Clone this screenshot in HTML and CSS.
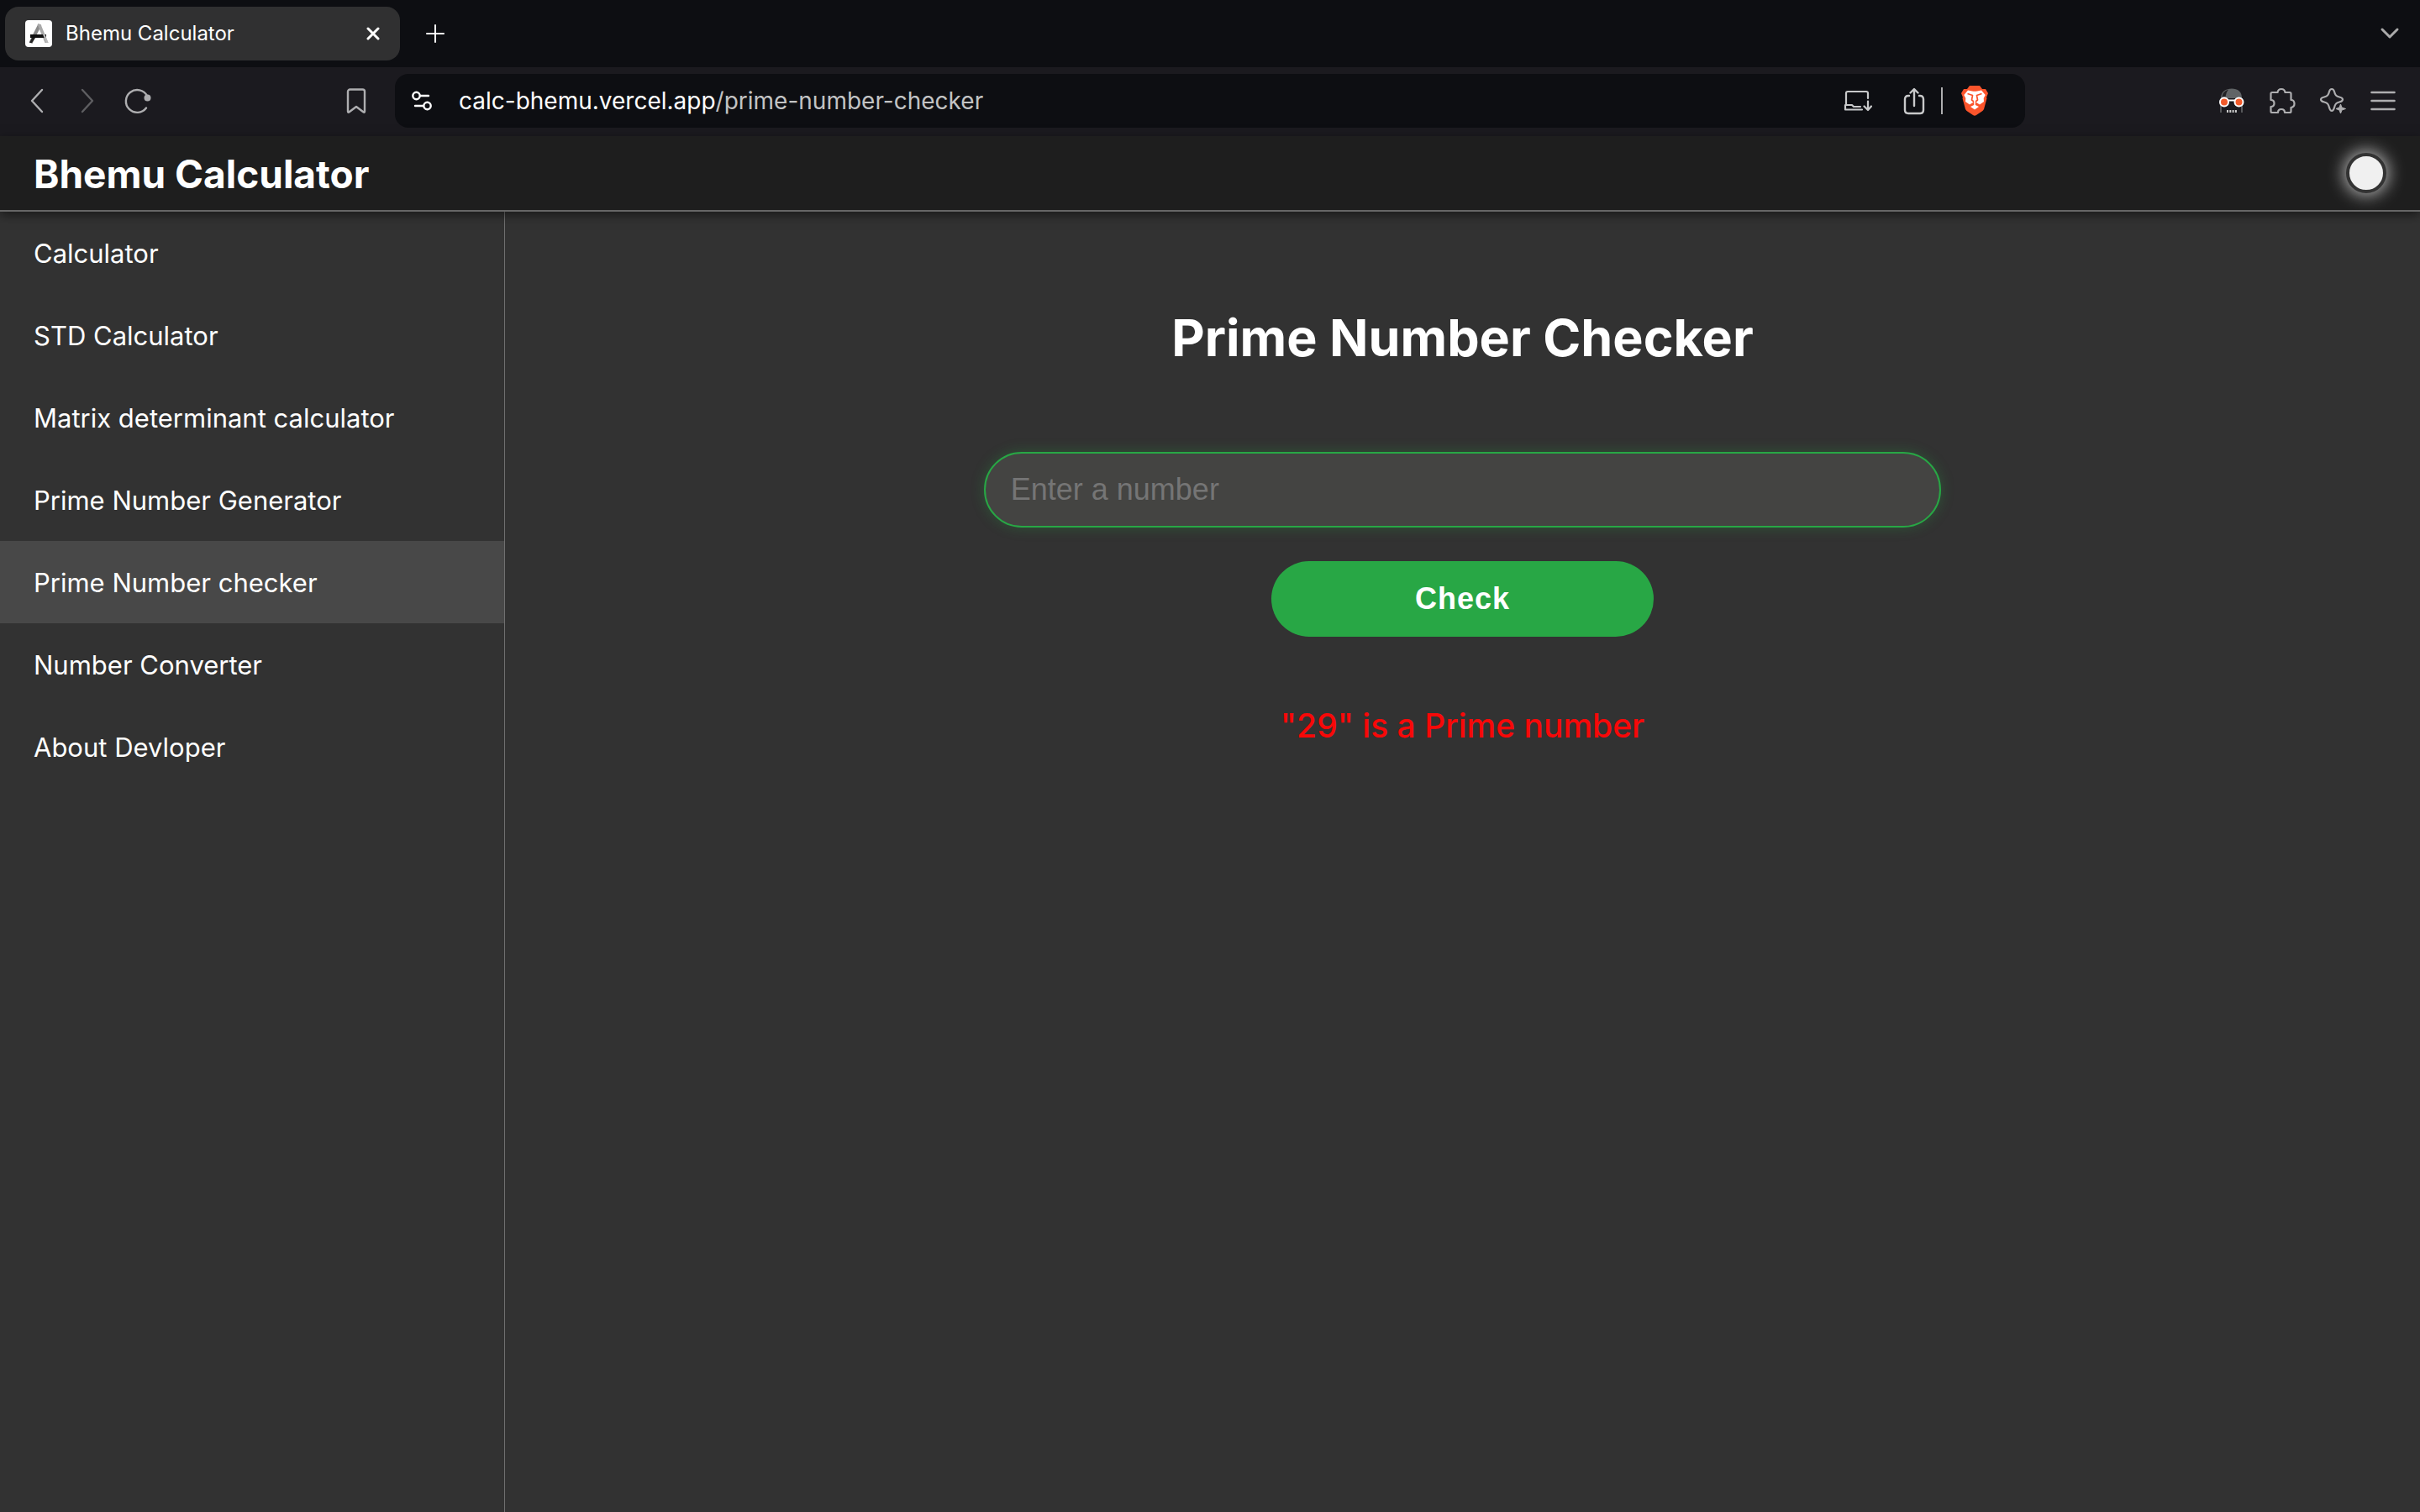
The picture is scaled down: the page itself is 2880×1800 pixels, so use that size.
FILE: index.html
```html
<!DOCTYPE html>
<html lang="en">
<head>
<meta charset="utf-8">
<title>Bhemu Calculator</title>
<link rel="stylesheet" href="styles.css">
</head>
<body>
<div class="window">
  <div class="tabstrip">
    <div class="tab">
      <svg class="tab-icon" width="32" height="32" viewBox="0 0 32 32" aria-hidden="true">
        <rect width="32" height="32" rx="4" fill="#fff"/>
        <path d="M17.500 5L6.500 27" stroke="#8a8a8a" stroke-width="4" fill="none"/>
        <path d="M14.500 5h4l9 22h-4z" fill="#a9a9a9"/>
        <path d="M6 17h19v4H6z" fill="#111"/>
        <path d="M8 21L5 27h3l4-6z" fill="#222"/>
        <path d="M21 17l4 10h2.500l-4-10z" fill="#bbb"/>
      </svg>
      <span class="tab-title">Bhemu Calculator</span>
      <button class="icon-button tab-close" aria-label="Close tab">
        <svg width="16" height="16" viewBox="0 0 16 16" fill="none" stroke="#fff" stroke-width="3" stroke-linecap="round"><path d="M2 2l12 12M14 2L2 14"/></svg>
      </button>
    </div>
    <button class="icon-button new-tab" aria-label="New tab">
      <svg width="24" height="24" viewBox="0 0 24 24" fill="none" stroke="#fff" stroke-width="2" stroke-linecap="round"><path d="M12 2v20M2 12h20"/></svg>
    </button>
    <button class="icon-button tab-search" aria-label="Search tabs">
      <svg width="24" height="16" viewBox="0 0 24 16" fill="none" stroke="#aaa" stroke-width="3" stroke-linecap="round" stroke-linejoin="round"><path d="M3 3l9 9 9-9"/></svg>
    </button>
  </div>

  <div class="toolbar">
    <button class="icon-button tool" aria-label="Back">
      <svg width="30" height="30" viewBox="0 0 30 30" fill="none" stroke="#aeaeb0" stroke-width="2.400" stroke-linecap="round" stroke-linejoin="round"><path d="M21 2L9 15l12 13"/></svg>
    </button>
    <button class="icon-button tool" aria-label="Forward">
      <svg width="30" height="30" viewBox="0 0 30 30" fill="none" stroke="#5e5e61" stroke-width="2.400" stroke-linecap="round" stroke-linejoin="round"><path d="M9 2l12 13L9 28"/></svg>
    </button>
    <button class="icon-button tool" aria-label="Reload">
      <svg width="32" height="32" viewBox="0 0 32 32" fill="none" stroke="#aeaeb0" stroke-width="2.400" stroke-linecap="round"><path d="M26 24.500A13.400 13.400 0 1 1 27 10"/><circle cx="27.500" cy="12.500" r="4" fill="#aeaeb0" stroke="none"/></svg>
    </button>
    <button class="icon-button tool bookmark" aria-label="Bookmark this page">
      <svg width="24" height="32" viewBox="0 0 24 32" fill="none" stroke="#aeaeb0" stroke-width="2.400" stroke-linejoin="round"><path d="M4.500 2.500h15a2.500 2.500 0 0 1 2.500 2.500v23.500q0 2-1.700.700L12 23l-8.300 6.200Q2 30.500 2 28.500V5a2.500 2.500 0 0 1 2.500-2.500z"/></svg>
    </button>
    <div class="address">
      <svg width="24" height="24" viewBox="0 0 24 24" fill="none" stroke="#fff" stroke-width="2.400" stroke-linecap="round" aria-hidden="true"><circle cx="5.500" cy="6" r="4.200"/><path d="M10 6h10"/><circle cx="18.500" cy="18" r="4.200"/><path d="M4 18h10"/></svg>
      <a class="url" href="#"><span class="url-host">calc-bhemu.vercel.app</span>/prime-number-checker</a>
      <button class="icon-button install" aria-label="Install app">
        <svg width="34" height="28" viewBox="0 0 34 28" fill="none" stroke="#c8c9ca" stroke-width="2.200" stroke-linecap="round" stroke-linejoin="round"><path d="M3 19V5q0-2 2-2h22q2 0 2 2v6M2 19h8l2 2h8M2 19v5.500h20"/><path d="M29 14.500v10M24.500 20.500L29 25l4-4.500"/></svg>
      </button>
      <button class="icon-button share" aria-label="Share">
        <svg width="32" height="34" viewBox="0 0 32 34" fill="none" stroke="#c8c9ca" stroke-width="2.400" stroke-linecap="round" stroke-linejoin="round"><path d="M10 11H9q-4 0-4 4v13q0 4 4 4h14q4 0 4-4V15q0-4-4-4h-1M16 23V3.500M11.500 7.500L16 3l4.500 4.500"/></svg>
      </button>
      <span class="divider"></span>
      <button class="icon-button" aria-label="Brave Shields">
        <svg width="32" height="36" viewBox="0 0 32 36"><path d="M10 0h12l3 4h4l3 5-2 5 .5 1L27 28q-1 2-3 3l-6 4q-2 1.500-4 0l-6-4q-2-1-3-3L1.500 15l.5-1-2-5 3-5h4z" fill="#fb542b"/><path d="M8 5.500l5 1q3 .600 6 0l5-1 4.700 5.500-2 4 .300 4-5 3.500-4-2.500h-4l-4 2.500-5-3.500.300-4-2-4z" fill="#fff"/><path d="M7.500 9.500l6 2-1 5.500 3.500 3 3.500-3-1-5.500 6-2" fill="none" stroke="#fb542b" stroke-width="1.700" stroke-linejoin="round"/><path d="M15.200 18h1.600v5l4.200 2-5 3.500-5-3.500 4.200-2z" fill="#fff"/></svg>
      </button>
    </div>
    <button class="icon-button tool" aria-label="Incognito extension">
      <svg width="32" height="32" viewBox="0 0 32 32"><path d="M3 13C3 5 9 1.500 16 1.500S28 5 28 13z" fill="#606466"/><path d="M4.500 11Q5 5 12 2.500 9 6 8.500 11z" fill="#202124"/><path d="M3 18v12M28 18v12" stroke="#67686a" stroke-width="1.600"/><path d="M11 15.500h9" stroke="#fff" stroke-width="2"/><circle cx="7" cy="17.500" r="5" fill="#f25a2a" stroke="#fff" stroke-width="2"/><circle cx="24.500" cy="17.500" r="5" fill="#f25a2a" stroke="#fff" stroke-width="2"/><path d="M10 28.500h12" stroke="#ccc" stroke-width="3" stroke-dasharray="2 1.300"/></svg>
    </button>
    <button class="icon-button tool" aria-label="Extensions">
      <svg width="32" height="32" viewBox="0 0 32 32" fill="none" stroke="#aeaeb0" stroke-width="2.200" stroke-linejoin="round"><path d="M4 6h6.500C11 3 12.500 2 15 2s4 1 4.500 4H25q1.500 0 1.500 1.500V15c3 0 4 2 4 4.500s-1 4-4 4.500v4.500Q26.500 30 25 30h-6c0-3-1.500-4-4-4s-4 1-4 4H4q-1.500 0-1.500-1.500V23c3 0 4-1.500 4-4s-1-4-4-4V7.500Q2.500 6 4 6z"/></svg>
    </button>
    <button class="icon-button tool" aria-label="Leo AI">
      <svg width="32" height="32" viewBox="0 0 32 32"><path d="M15 2c-2 0-2.500 1-3 3-1 4-2 5.500-6 6.500-3 .700-4 1.500-4 3s1 2.300 4 3c4 1 5 2.500 6 6.500.500 2 1 4 3 4s2.500-2 3-4c1-4 2-5.500 6-6.500 3-.700 4-1.500 4-3s-1-2.300-4-3c-4-1-5-2.500-6-6.500-.500-2-1-3-3-3z" fill="none" stroke="#aeaeb0" stroke-width="2.200"/><path d="M25.500 20l1.500 4 4.500 1.500-4.500 1.500-1.500 4-1.500-4-4-1.500 4-1.500z" fill="#aeaeb0" stroke="#aeaeb0"/></svg>
    </button>
    <button class="icon-button tool" aria-label="Menu">
      <svg width="30" height="26" viewBox="0 0 30 26" stroke="#aeaeb0" stroke-width="2.600" stroke-linecap="round"><path d="M1.500 3h27M1.500 13h27M1.500 23h27"/></svg>
    </button>
  </div>

  <header class="app-header">
    <div class="brand">Bhemu Calculator</div>
    <button class="theme-toggle" aria-label="Toggle theme"></button>
  </header>

  <div class="app-body">
    <nav class="sidebar">
      <a class="nav-link" href="#">Calculator</a>
      <a class="nav-link" href="#">STD Calculator</a>
      <a class="nav-link" href="#">Matrix determinant calculator</a>
      <a class="nav-link" href="#">Prime Number Generator</a>
      <a class="nav-link active" href="#" aria-current="page">Prime Number checker</a>
      <a class="nav-link" href="#">Number Converter</a>
      <a class="nav-link" href="#">About Devloper</a>
    </nav>
    <main class="content">
      <h1 class="title">Prime Number Checker</h1>
      <form class="checker">
        <input class="number-input" type="text" placeholder="Enter a number" aria-label="Enter a number">
        <button class="check-button" type="button">Check</button>
      </form>
      <p class="result">"29" is a Prime number</p>
    </main>
  </div>
</div>
</body>
</html>
```
FILE: styles.css
```css
* {
  box-sizing: border-box;
}

body {
  margin: 0;
  background: #323232;
  color: #fff;
  font-family: Inter, "Liberation Sans", sans-serif;
}

.window {
  display: flex;
  flex-direction: column;
  min-height: 100vh;
}

.icon-button {
  display: flex;
  align-items: center;
  justify-content: center;
  padding: 0;
  border: 0;
  background: none;
}

/* Browser tabs */
.tabstrip {
  display: flex;
  align-items: center;
  height: 80px;
  padding: 0 24px 0 6px;
  background: #0d0e12;
}

.tab {
  display: flex;
  align-items: center;
  width: 470px;
  height: 64px;
  padding: 0 24px;
  border-radius: 16px;
  background: #303031;
}

.tab-title {
  margin-left: 16px;
  font-size: 24px;
  line-height: 32px;
}

.tab-close {
  margin-left: auto;
}

.new-tab {
  margin-left: 30px;
}

.tab-search {
  margin-left: auto;
}

/* Browser toolbar */
.toolbar {
  display: flex;
  align-items: center;
  height: 82px;
  padding: 0 14px 2px;
  background: #1b1a1f;
}

.tool {
  flex: none;
  width: 60px;
  height: 60px;
}

.bookmark {
  margin: 0 16px 0 200px;
}

.address {
  display: flex;
  flex: 1;
  align-items: center;
  height: 64px;
  margin-right: 216px;
  padding: 0 44px 0 20px;
  border-radius: 16px;
  background: #0d0e12;
}

.url {
  margin-left: 32px;
  color: #c2c3c4;
  font-size: 28px;
  line-height: 40px;
  text-decoration: none;
}

.url-host {
  color: #fff;
}

.install {
  margin-left: auto;
}

.share {
  margin: 0 16px 0 34px;
}

.divider {
  width: 2px;
  height: 32px;
  margin-right: 22px;
  background: #aeaeb0;
}

/* App header */
.app-header {
  display: flex;
  z-index: 1;
  align-items: center;
  justify-content: space-between;
  height: 90px;
  padding: 0 40px;
  border-bottom: 2px solid #666;
  background: #1e1e1e;
  box-shadow: 0 4px 12px rgba(0, 0, 0, 0.5);
}

.brand {
  padding-top: 2px;
  font-size: 46px;
  font-weight: 700;
  line-height: 60px;
}

.theme-toggle {
  width: 48px;
  height: 48px;
  padding: 0;
  border: 4px solid #333;
  border-radius: 50%;
  background: #f0f0f0;
  box-shadow: 0 0 20px 2px rgba(255, 255, 255, 0.7);
}

/* App layout */
.app-body {
  display: flex;
  flex: 1;
}

.sidebar {
  flex: none;
  width: 601px;
  border-right: 1px solid #707070;
}

.nav-link {
  display: block;
  padding: 26px 40px 24px;
  color: #fff;
  font-size: 31px;
  line-height: 48px;
  text-decoration: none;
}

.nav-link.active {
  background: #484848;
}

.content {
  display: flex;
  flex: 1;
  flex-direction: column;
  align-items: center;
  padding-top: 110px;
}

.title {
  margin: 0 0 96px;
  font-size: 61px;
  font-weight: 700;
  line-height: 80px;
}

.checker {
  display: flex;
  flex-direction: column;
  align-items: center;
  gap: 40px;
  width: 100%;
}

.number-input {
  width: 50%;
  height: 90px;
  padding: 0 30px;
  border: 2px solid #28a745;
  border-radius: 45px;
  outline: none;
  background: #444442;
  box-shadow: 0 0 16px rgba(40, 167, 69, 0.3);
  color: #fff;
  font-family: "Liberation Sans", Arial, sans-serif;
  font-size: 36px;
}

.number-input::placeholder {
  color: #757575;
}

.check-button {
  width: 20%;
  height: 90px;
  border: 0;
  border-radius: 45px;
  background: #28a745;
  color: #fff;
  font-family: "Liberation Sans", Arial, sans-serif;
  font-size: 36px;
  font-weight: 700;
  letter-spacing: 1px;
}

.result {
  margin: 80px 0 0;
  color: #f80808;
  font-size: 39px;
  font-weight: 500;
  line-height: 52px;
}
```
